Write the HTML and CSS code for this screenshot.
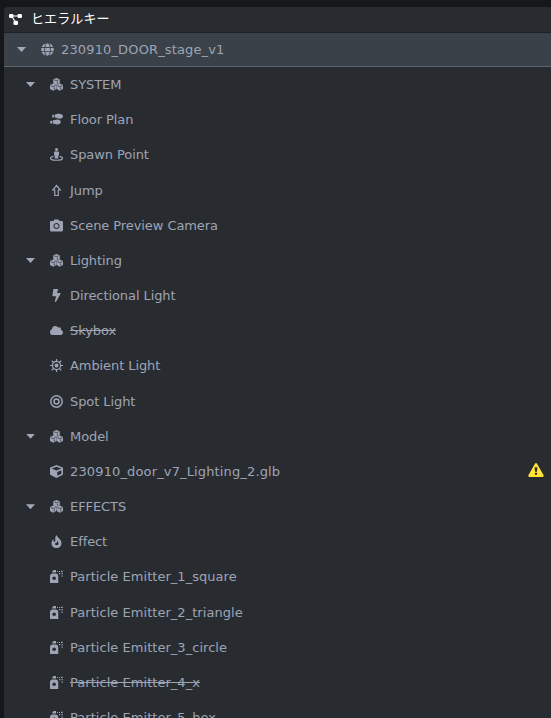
FILE: index.html
```html
<!DOCTYPE html>
<html lang="ja">
  <head>
    <meta charset="UTF-8" />
    <meta name="viewport" content="width=device-width, initial-scale=1.0" />
    <title>ヒエラルキー</title>
    <link rel="stylesheet" href="styles.css">
  </head>
  <body>
    <!-- Icon set -->
    <svg class="sprite" aria-hidden="true">
      <symbol id="globe" viewBox="0 0 496 512">
        <path d="M336.500 160C322 70.700 287.800 8 248 8s-74 62.700-88.500 152h177zM152 256c0 22.200 1.200 43.500 3.300 64h185.300c2.100-20.500 3.300-41.800 3.300-64s-1.200-43.500-3.300-64H155.300c-2.100 20.500-3.300 41.800-3.300 64zm324.700-96c-28.600-67.900-86.500-120.400-158-141.600 24.400 33.800 41.200 84.700 50 141.600h108zM177.200 18.400C105.800 39.600 47.800 92.100 19.300 160h108c8.700-56.900 25.500-107.800 49.900-141.600zM487.400 192H372.700c2.100 21 3.300 42.500 3.300 64s-1.200 43-3.300 64h114.600c5.500-20.500 8.600-41.800 8.600-64s-3.100-43.500-8.500-64zM120 256c0-21.500 1.200-43 3.300-64H8.600C3.200 212.500 0 233.800 0 256s3.200 43.500 8.600 64h114.600c-2-21-3.200-42.500-3.200-64zm39.500 96c14.500 89.300 48.700 152 88.500 152s74-62.700 88.500-152h-177zm159.300 141.600c71.400-21.200 129.400-73.700 158-141.600h-108c-8.800 56.900-25.600 107.800-50 141.600zM19.300 352c28.600 67.900 86.500 120.400 158 141.600-24.400-33.800-41.200-84.700-50-141.600h-108z" />
      </symbol>
      <symbol id="cubes" viewBox="0 0 26 26">
        <path d="M13 0l6.500 2.500v8L13 13.500 6.500 10.500v-8z M6.500 11l6.200 2.800v8L6.500 25.500 0 22v-8.200z M19.500 11l6.500 2.800V22l-6.500 3.500-6.200-3.700v-8z" />
        <path class="cut" d="M8.800 3.700L13 5.500l4.200-1.800M15 7.500v3.500M1.500 15.200l5 2 4.800-2M8.500 19v4M14.800 15.200l4.700 2 5-2M21.500 19v4" />
      </symbol>
      <symbol id="floor-plan" viewBox="0 0 26 26">
        <path d="M9.500 3.200C12 3 14 1.600 18 1.600c5 0 8 2 8 5 0 3.200-3 5-6.500 5-4 0-5-2.500-10-2.500zM5 3.500h3v5.600H6C4 9 4 4.500 5 3.500zM5.500 15.200C8 15 10 13.200 14 13.200c5 0 7.500 1.800 7.500 4.800 0 3.200-3 5-6.500 5-4 0-5-2-9.500-2zM1.200 15.600h3V21H2c-2.200-.4-2.200-4-.8-5.400z" />
      </symbol>
      <symbol id="spawn-point" viewBox="0 0 26 26">
        <circle cx="13" cy="3" r="3" />
        <path d="M10 7h6c1.400 0 2 .8 2 2v5.500h-1.500V21h-7v-6.500H8V9c0-1.200.6-2 2-2z" />
        <path class="line" d="M7 16.800c-3.500.7-6 1.500-6 3.200C1 22.700 6 24.500 13 24.500s12-1.800 12-4.500c0-1.700-2.500-2.500-6-3.200" />
      </symbol>
      <symbol id="jump" viewBox="0 0 26 26">
        <path class="line" d="M13 3l7.500 9h-4v11h-7v-11h-4z" />
      </symbol>
      <symbol id="camera" viewBox="0 0 512 512">
        <path d="M512 130v310c0 26.500-21.500 48-48 48H48c-26.500 0-48-21.500-48-48V130c0-26.500 21.500-48 48-48h88l12.300-26.900c7-18.700 24.900-31.100 44.900-31.100h125.500c20 0 37.900 12.400 44.900 31.100L376 82h88c26.500 0 48 21.500 48 48zM376 274c0-66.200-53.800-120-120-120s-120 53.800-120 120 53.800 120 120 120 120-53.800 120-120zm-40 0c0 44-36 80-80 80s-80-36-80-80 36-80 80-80 80 36 80 80z" />
      </symbol>
      <symbol id="bolt" viewBox="0 0 320 512">
        <path d="M296 160H180.600l42.600-129.800C227.200 15 215.700 0 200 0H56C44 0 33.800 8.900 32.200 20.800l-32 240C-1.700 275.200 9.500 288 24 288h118.700L96.600 482.500c-3.600 15.200 8 29.500 23.300 29.500 8.400 0 16.400-4.400 20.800-12l176-304c9.300-15.900-2.200-36-20.700-36z" />
      </symbol>
      <symbol id="cloud" viewBox="0 0 640 512">
        <path d="M537.600 226.600c4.100-10.700 6.400-22.400 6.400-34.600 0-53-43-96-96-96-19.700 0-38.100 6-53.300 16.200C367 64.200 315.300 32 256 32c-88.400 0-160 71.600-160 160 0 2.700.1 5.400.2 8.100C40.200 219.800 0 273.200 0 336c0 79.500 64.500 144 144 144h368c70.700 0 128-57.300 128-128 0-61.900-44-113.600-102.400-125.400z" />
      </symbol>
      <symbol id="sun" viewBox="0 0 26 26">
        <circle class="line" cx="13" cy="13" r="8.200" />
        <circle cx="13" cy="13" r="4" />
        <path class="line" d="M13 0v5M13 21v5M0 13h5M21 13h5M3.500 3.500l4 4M18.500 18.500l4 4M3.500 22.500l4-4M18.500 7.500l4-4" />
      </symbol>
      <symbol id="spot" viewBox="0 0 26 26">
        <circle class="line thick" cx="13" cy="13" r="11.400" />
        <circle class="line thick" cx="13" cy="13" r="5" />
      </symbol>
      <symbol id="cube" viewBox="0 0 512 512">
        <path d="M239.100 6.300l-208 78c-18.700 7-31.100 25-31.100 45v225.100c0 18.200 10.300 34.800 26.500 42.900l208 104c13.500 6.800 29.400 6.800 42.900 0l208-104c16.300-8.100 26.500-24.800 26.500-42.900V129.300c0-20-12.400-37.900-31.100-44.900l-208-78C262 2.200 250 2.200 239.100 6.300zM256 68.400l192 72v1.100l-192 78-192-78v-1.100l192-72zm32 356V275.500l160-65v133.900l-160 80z" />
      </symbol>
      <symbol id="fire" viewBox="0 0 26 26">
        <path d="M13.500 0c.5 5 9.500 8.500 9.500 16 0 6-4 10-10 10S3 22 3 16.500c0-4 2-6.500 4-8.500v4c0 2 3 2.500 3.500.3C11.500 9 8.500 5 13.500 0z" />
        <path class="hole" d="M14 11.500c4 3.500 4.500 8.500-.5 9-3 0-4.500-2-3.500-4.500 2 1.500 4.500 0 4-4.500z" />
      </symbol>
      <symbol id="particle" viewBox="0 0 26 26">
        <path d="M4.500 5C4.500 2 6 0 8 0h4v5zM0 13c0-3.500 2-6 5-6h6.500c3 0 5 2.500 5 6v13H0z" />
        <circle class="hole" cx="8.300" cy="16.500" r="3.600" />
        <path d="M14 2h2v2h-2zM18 2h2v2h-2zM22 1.500h3.500v2.500H22zM18 6h2.500v2.500H18zM23 6h2.500v2.500H23zM23 11h2.500v2.500H23z" />
      </symbol>
      <symbol id="hierarchy" viewBox="0 0 26 22">
        <path class="line" d="M4 4h18M5 4l9 14" />
        <rect x="0" y="0" width="9" height="8" rx="2.500" />
        <rect x="17" y="0" width="9" height="8" rx="2.500" />
        <rect x="9" y="13.500" width="9" height="8.500" rx="2.500" />
      </symbol>
      <symbol id="warning" viewBox="0 0 32 28">
        <path d="M13.800 1.500c1-1.800 3.400-1.800 4.400 0l13 23c1 1.700-.2 3.500-2.200 3.500H3c-2 0-3.200-1.800-2.200-3.500z" />
        <path class="mark" d="M13.300 8.500h5.400l-.8 9h-3.800zM13.800 19.500h4.400v4h-4.400z" />
      </symbol>
    </svg>

    <div class="panel">
      <div class="panel-header">
        <svg class="header-icon"><use href="#hierarchy" /></svg>
        <span class="title">ヒエラルキー</span>
      </div>
      <ul class="tree">
        <li class="node root selected">
          <span class="toggle"></span>
          <svg class="icon"><use href="#globe" /></svg>
          <span class="label file">230910_DOOR_stage_v1</span>
        </li>
        <li class="node">
          <span class="toggle"></span>
          <svg class="icon"><use href="#cubes" /></svg>
          <span class="label">SYSTEM</span>
        </li>
        <li class="node leaf">
          <svg class="icon"><use href="#floor-plan" /></svg>
          <span class="label">Floor Plan</span>
        </li>
        <li class="node leaf">
          <svg class="icon"><use href="#spawn-point" /></svg>
          <span class="label">Spawn Point</span>
        </li>
        <li class="node leaf">
          <svg class="icon"><use href="#jump" /></svg>
          <span class="label">Jump</span>
        </li>
        <li class="node leaf">
          <svg class="icon"><use href="#camera" /></svg>
          <span class="label">Scene Preview Camera</span>
        </li>
        <li class="node">
          <span class="toggle"></span>
          <svg class="icon"><use href="#cubes" /></svg>
          <span class="label">Lighting</span>
        </li>
        <li class="node leaf">
          <svg class="icon"><use href="#bolt" /></svg>
          <span class="label">Directional Light</span>
        </li>
        <li class="node leaf">
          <svg class="icon"><use href="#cloud" /></svg>
          <span class="label disabled">Skybox</span>
        </li>
        <li class="node leaf">
          <svg class="icon"><use href="#sun" /></svg>
          <span class="label">Ambient Light</span>
        </li>
        <li class="node leaf">
          <svg class="icon"><use href="#spot" /></svg>
          <span class="label">Spot Light</span>
        </li>
        <li class="node">
          <span class="toggle"></span>
          <svg class="icon"><use href="#cubes" /></svg>
          <span class="label">Model</span>
        </li>
        <li class="node leaf">
          <svg class="icon"><use href="#cube" /></svg>
          <span class="label file">230910_door_v7_Lighting_2.glb</span>
          <svg class="warning"><use href="#warning" /></svg>
        </li>
        <li class="node">
          <span class="toggle"></span>
          <svg class="icon"><use href="#cubes" /></svg>
          <span class="label">EFFECTS</span>
        </li>
        <li class="node leaf">
          <svg class="icon"><use href="#fire" /></svg>
          <span class="label">Effect</span>
        </li>
        <li class="node leaf">
          <svg class="icon"><use href="#particle" /></svg>
          <span class="label emitter">Particle Emitter_1_square</span>
        </li>
        <li class="node leaf">
          <svg class="icon"><use href="#particle" /></svg>
          <span class="label emitter">Particle Emitter_2_triangle</span>
        </li>
        <li class="node leaf">
          <svg class="icon"><use href="#particle" /></svg>
          <span class="label emitter">Particle Emitter_3_circle</span>
        </li>
        <li class="node leaf">
          <svg class="icon"><use href="#particle" /></svg>
          <span class="label emitter disabled">Particle Emitter_4_x</span>
        </li>
        <li class="node leaf">
          <svg class="icon"><use href="#particle" /></svg>
          <span class="label emitter">Particle Emitter_5_hex</span>
        </li>
      </ul>
    </div>
  </body>
</html>
```

FILE: styles.css
```css
* {
  box-sizing: border-box;
}

body {
  margin: 0;
  height: 100vh;
  padding: 7px 0 0 4px;
  overflow: hidden;
  background-color: #15171b;
  color: #9fa4b5;
  font-family: "DejaVu Sans", "Noto Sans CJK JP", sans-serif;
  font-size: 13px;
}

.sprite {
  display: none;
}

.panel {
  height: 100%;
  overflow: hidden;
  background-color: #282c31;
  border-top-left-radius: 4px;
}

.panel-header {
  display: flex;
  align-items: center;
  gap: 9px;
  height: 26px;
  padding: 0 5px 3px;
  border-bottom: 1px solid #1d2024;
  color: #fff;
  font-family: "Noto Sans CJK JP", sans-serif;
  font-size: 13px;
}

.title {
  padding-bottom: 2px;
  letter-spacing: 0.1px;
}

.header-icon {
  width: 13px;
  height: 11px;
  margin-top: 2px;
  fill: #fff;
  stroke: #fff;
}

.tree {
  margin: 0;
  padding: 0;
  list-style: none;
}

.node {
  display: flex;
  align-items: center;
  height: 35.18px;
  padding: 0 7px 0 22px;
  white-space: nowrap;
}

.root {
  height: 34px;
  padding-left: 13px;
}

.selected {
  background-color: #3a4148;
  border-bottom: 1px solid #5d646c;
}

.leaf {
  padding-left: 46px;
}

.toggle {
  width: 9px;
  height: 5px;
  margin-right: 15px;
  background-color: #a3a8b8;
  clip-path: polygon(0 0, 100% 0, 50% 100%);
}

.icon {
  flex: none;
  width: 13px;
  height: 13px;
  margin-right: 7px;
  fill: #9fa4b5;
  stroke: #9fa4b5;
}

.label {
  letter-spacing: -0.08px;
}

.file {
  letter-spacing: 0.14px;
}

.emitter {
  letter-spacing: 0.04px;
}

symbol path,
symbol circle,
symbol rect {
  stroke: none;
}

symbol .line {
  fill: none;
  stroke: inherit;
  stroke-width: 2.400;
}

symbol .thick {
  stroke-width: 3;
}

symbol .cut {
  fill: none;
  stroke: #282c31;
  stroke-width: 1.500;
}

symbol .hole,
symbol .mark {
  fill: #282c31;
}

.disabled {
  text-decoration: line-through;
}

.warning {
  width: 16px;
  height: 14px;
  margin-bottom: 2px;
  margin-left: auto;
  fill: #ffe433;
}
```
